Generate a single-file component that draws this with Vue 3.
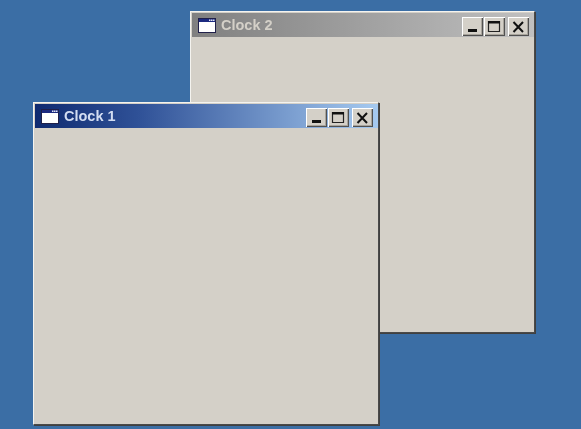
<script setup>
const windows = [
  { id: 2, title: 'Clock 2', active: false },
  { id: 1, title: 'Clock 1', active: true }
]
</script>

<template>
  <main class="desktop">
    <section
      v-for="win in windows"
      :key="win.id"
      class="window"
      :class="win.active ? 'win-one' : 'win-two'"
    >
      <header class="titlebar">
        <svg class="app-icon" width="18" height="15" viewBox="0 0 18 15" aria-hidden="true">
          <rect x="0.5" y="0.5" width="17" height="14" fill="#fff" stroke="#20204a" />
          <rect x="1" y="1" width="16" height="3" fill="#1c2a80" />
          <rect x="11" y="1.5" width="1.5" height="1.5" fill="#dfe4f5" />
          <rect x="13" y="1.5" width="1.5" height="1.5" fill="#dfe4f5" />
          <rect x="15" y="1.5" width="1.5" height="1.5" fill="#dfe4f5" />
        </svg>
        <span class="title">{{ win.title }}</span>
        <div class="controls">
          <button class="ctl" aria-label="Minimize">
            <svg width="21" height="19" viewBox="0 0 21 19"><rect x="6" y="12" width="9" height="3" fill="#111" /></svg>
          </button>
          <button class="ctl" aria-label="Maximize">
            <svg width="21" height="19" viewBox="0 0 21 19"><path d="M4.5 4.5h11v10h-11z" fill="none" stroke="#222" stroke-width="1.2" /><rect x="4" y="4" width="12" height="2.5" fill="#111" /></svg>
          </button>
          <button class="ctl ctl-close" aria-label="Close">
            <svg width="21" height="19" viewBox="0 0 21 19"><path d="M5.5 5l9.5 10M15 5l-9.5 10" fill="none" stroke="#111" stroke-width="2" /></svg>
          </button>
        </div>
      </header>
    </section>
  </main>
</template>

<style scoped>
.desktop {
  position: relative;
  width: 581px;
  height: 429px;
  overflow: hidden;
  background: #3b6ea5;
  filter: blur(0.4px);
}
.window {
  position: absolute;
  box-sizing: border-box;
  padding: 1px 0 2px 1px;
  background: #d4d0c8;
  border-style: solid;
  border-width: 1px;
  border-color: #f4f3ef #4a4a4a #4a4a4a #f4f3ef;
  box-shadow: 1px 1px 0 #404040;
}
.win-one {
  left: 33px;
  top: 102px;
  width: 346px;
  height: 323px;
}
.win-two {
  left: 190px;
  top: 11px;
  width: 345px;
  height: 322px;
}
.titlebar {
  display: flex;
  align-items: center;
  height: 24px;
  padding: 0 5px 0 6px;
  font-family: "Liberation Sans", Arial, sans-serif;
  font-size: 14.5px;
  font-weight: 700;
}
.win-one .titlebar {
  background: linear-gradient(90deg, #0f2a70 0%, #2f5197 30%, #a6caf0 100%);
  color: #d3ddf2;
}
.win-two .titlebar {
  background: linear-gradient(90deg, #808080 0%, #c0c0c0 100%);
  color: #d4d0c8;
}
.app-icon {
  flex: none;
  margin-right: 5px;
}
.controls {
  display: flex;
  gap: 1px;
  margin-left: auto;
  padding-top: 2px;
}
.ctl {
  display: block;
  width: 21px;
  height: 19px;
  padding: 0;
  background: #d4d0c8;
  border: 0;
  box-shadow: inset 1px 1px 0 #fff, inset -1px -1px 0 #505050, inset -2px -2px 0 #a8a49c;
}
.ctl svg {
  display: block;
}
.ctl-close {
  margin-left: 2px;
}
</style>
